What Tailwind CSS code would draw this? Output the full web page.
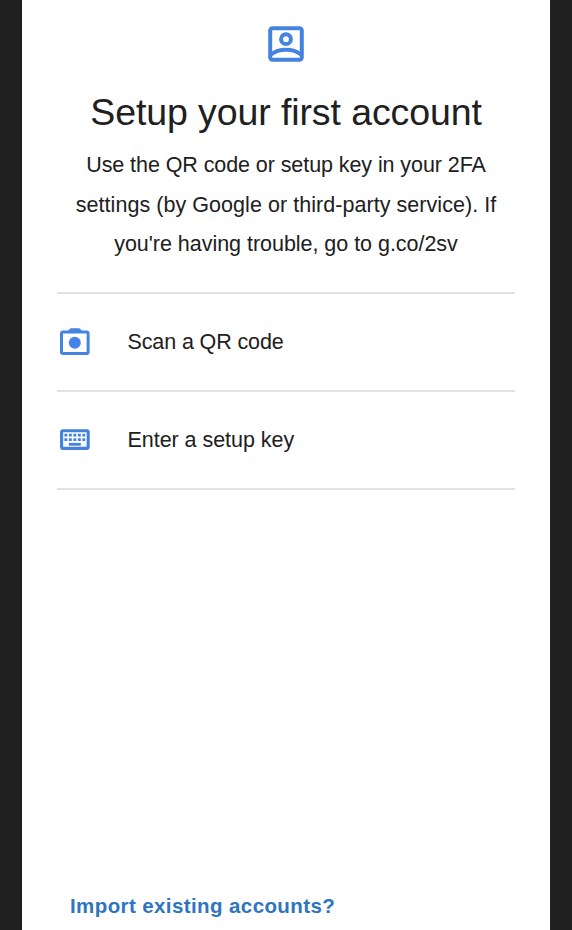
<!DOCTYPE html>
<html lang="en">
<head>
<meta charset="utf-8">
<title>Setup your first account</title>
<script src="https://cdn.jsdelivr.net/npm/@tailwindcss/browser@4"></script>
</head>
<body class="bg-[#202020] font-['Liberation_Sans',Arial,sans-serif] text-[#202020]">
<main class="mx-[22px] flex h-[930px] flex-col overflow-hidden bg-white px-[35px]">
  <header class="flex flex-col items-center pt-[26px] text-center">
    <svg class="h-9 w-9" viewBox="0 0 36 36" fill="none" stroke="#4583e0" stroke-width="4">
      <rect x="2.2" y="2.2" width="31.6" height="31.6" rx="2.2"/>
      <circle cx="18" cy="13.2" r="4.9"/>
      <path d="M3 28.5C7 25.3 12.2 23.8 18 23.8S29 25.3 33 28.5"/>
    </svg>
    <h1 class="mt-[26px] whitespace-nowrap text-[37.5px] leading-[48px] tracking-[-0.1px]">Setup your first account</h1>
    <p class="mt-[10px] flex flex-col items-center whitespace-nowrap text-[21.5px] leading-[39.5px]">
      <span class="tracking-[-0.08px]">Use the QR code or setup key in your 2FA</span>
      <span class="tracking-[0.05px]">settings (by Google or third-party service). If</span>
      <span class="tracking-[-0.03px]">you're having trouble, go to g.co/2sv</span>
    </p>
  </header>
  <ul class="mt-[27.5px] border-t-2 border-[#e2e2e2]">
    <li class="flex h-[98px] items-center border-b-2 border-[#e2e2e2] pl-[3px]">
      <svg class="h-[30px] w-[30px]" viewBox="0 0 30 30">
        <path d="M8 4.5 10.5 1.8H19.5L22 4.5Z" fill="#4583e0" stroke="#4583e0" stroke-linejoin="round"/>
        <rect x="1.5" y="5" width="26.6" height="21.4" rx="1.5" fill="none" stroke="#4583e0" stroke-width="3"/>
        <circle cx="14.8" cy="15.8" r="6" fill="#4583e8"/>
      </svg>
      <span class="ml-[37.5px] text-[21.5px] tracking-[-0.12px]">Scan a QR code</span>
    </li>
    <li class="flex h-[98px] items-center border-b-2 border-[#e2e2e2] pl-[3px]">
      <svg class="h-[30px] w-[30px]" viewBox="0 0 30 30">
        <rect x="1.6" y="5.8" width="26.6" height="17.6" rx="1.5" fill="none" stroke="#4381dc" stroke-width="3.1"/>
        <path d="M4.4 10.1H25.2M4.4 14.6H25.2" stroke="#4381dc" stroke-width="2.8" stroke-dasharray="2.9 1.6"/>
        <path d="M8.8 19.3H20.8" stroke="#4381dc" stroke-width="2.8"/>
      </svg>
      <span class="ml-[37.5px] text-[21.5px] tracking-[-0.04px]">Enter a setup key</span>
    </li>
  </ul>
  <a class="mt-auto mb-[9px] ml-[13px] whitespace-nowrap text-[20.5px] leading-[30px] font-bold tracking-[0.4px] text-[#2e75c0]">Import existing accounts?</a>
</main>
</body>
</html>
